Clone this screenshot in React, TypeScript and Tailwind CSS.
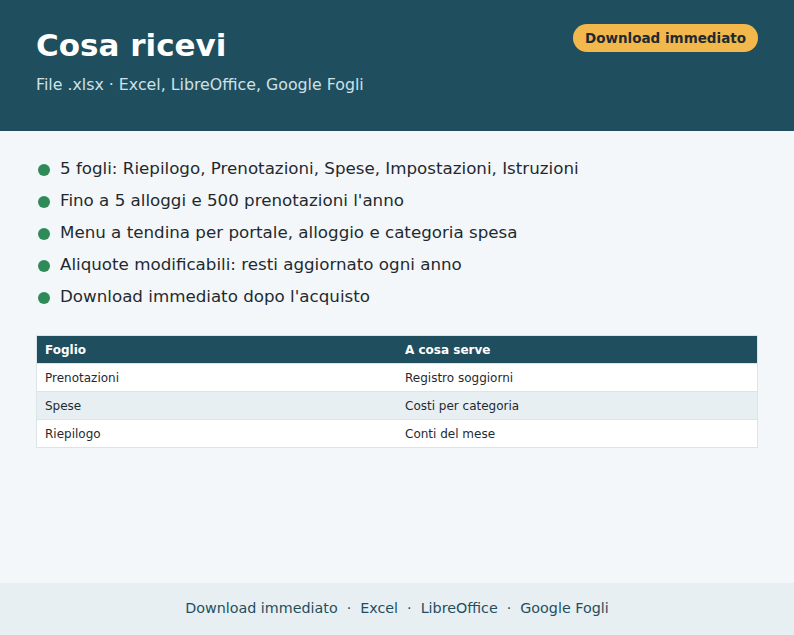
export default function App() {
  const items = [
    "5 fogli: Riepilogo, Prenotazioni, Spese, Impostazioni, Istruzioni",
    "Fino a 5 alloggi e 500 prenotazioni l'anno",
    "Menu a tendina per portale, alloggio e categoria spesa",
    "Aliquote modificabili: resti aggiornato ogni anno",
    "Download immediato dopo l'acquisto",
  ];
  const rows = [
    ["Prenotazioni", "Registro soggiorni"],
    ["Spese", "Costi per categoria"],
    ["Riepilogo", "Conti del mese"],
  ];
  return (
    <div className="w-[794px] h-[635px] flex flex-col bg-[#f4f7f9] text-[#1f2a30]" style={{ fontFamily: '"DejaVu Sans", sans-serif' }}>
      <div className="h-[131px] bg-[#1f4e5f] px-9 pt-[26px] flex justify-between items-start shrink-0">
        <div>
          <div className="text-[31px] font-bold text-white leading-[38px]">Cosa ricevi</div>
          <div className="text-[15.8px] text-[#cfe1e8] mt-[11px] leading-[20px]">File .xlsx · Excel, LibreOffice, Google Fogli</div>
        </div>
        <div className="mt-[-2px] bg-[#f2b84b] rounded-full px-3 h-[28px] flex items-center text-[13.5px] font-bold text-[#1f2a30]">Download immediato</div>
      </div>
      <div className="flex-1 px-9">
        <ul className="pt-[22px] flex flex-col">
          {items.map((t) => (
            <li key={t} className="flex items-center h-[32px] text-[16.7px]">
              <span className="w-[12px] h-[12px] rounded-full bg-[#2e8b57] ml-[2px] mr-[10px] mt-[2px] shrink-0" />
              {t}
            </li>
          ))}
        </ul>
        <table className="mt-[22px] w-full border border-[#dbe4e8] border-collapse text-[12px]">
          <thead>
            <tr className="bg-[#1f4e5f] text-white h-[28px]">
              <th className="text-left font-bold px-2 w-1/2">Foglio</th>
              <th className="text-left font-bold px-2">A cosa serve</th>
            </tr>
          </thead>
          <tbody>
            {rows.map((r, i) => (
              <tr key={r[0]} className={`h-[28px] border-t border-[#dbe4e8] ${i === 1 ? "bg-[#e8eff2]" : "bg-white"}`}>
                <td className="px-2">{r[0]}</td>
                <td className="px-2">{r[1]}</td>
              </tr>
            ))}
          </tbody>
        </table>
      </div>
      <div className="h-[52px] bg-[#e8eff2] flex items-center justify-center text-[14.3px] text-[#1f4e5f] shrink-0 gap-[9px]">
        <span>Download immediato</span><span>·</span><span>Excel</span><span>·</span><span>LibreOffice</span><span>·</span><span>Google Fogli</span>
      </div>
    </div>
  );
}
